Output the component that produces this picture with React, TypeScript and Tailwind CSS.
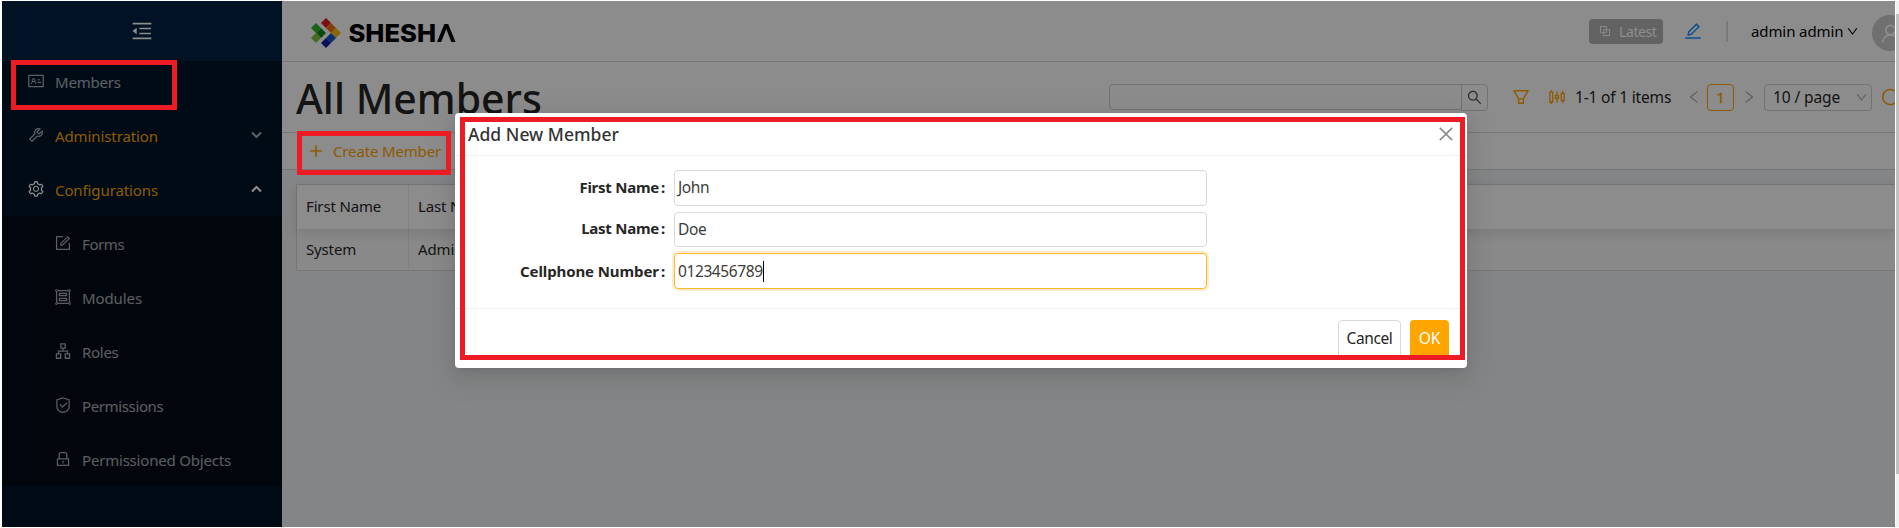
import React from 'react';
import {
  AiOutlineMenuFold, AiOutlineIdcard, AiOutlineTool, AiOutlineSetting, AiOutlineForm, AiOutlineGroup,
  AiOutlineApartment, AiOutlineSafety, AiOutlineLock, AiOutlineDown, AiOutlineBlock,
  AiOutlineEdit, AiOutlineUser, AiOutlineSearch, AiOutlineFilter, AiOutlineSliders, AiOutlineLeft,
  AiOutlineRight, AiOutlineReload, AiOutlinePlus, AiOutlineClose,
} from 'react-icons/ai';

type Icon = React.ComponentType<{ className?: string }>;

function MenuItem({ icon: I, label, tracking, arrow, parent, open, nested }: {
  icon: Icon; label: string; tracking: string; arrow?: 'up' | 'down'; parent?: boolean; open?: boolean; nested?: boolean;
}) {
  return (
    <li className={`flex h-[54px] items-center pr-5 ${nested ? 'pl-[52px]' : 'pl-[25px]'} ${open ? 'text-white' : 'text-white/65'}`}>
      <I className="-mt-0.5 h-[18px] w-[18px] shrink-0" />
      <span className={`ml-[10px] flex-1 whitespace-nowrap text-[15px] ${tracking} ${parent ? 'text-[#ffa500]' : ''}`}>{label}</span>
      {arrow && (
        <svg className="-mt-0.5" width="11" height="8" viewBox="0 0 11 8" fill="none" stroke="currentColor" strokeWidth="2">
          <path d={arrow === 'down' ? 'M1 1.500 5.500 6 10 1.500' : 'M1 6.500 5.500 2 10 6.500'} />
        </svg>
      )}
    </li>
  );
}

function Sidebar() {
  return (
    <aside className="w-[280px] shrink-0 bg-[#001529]">
      <div className="relative z-10 flex h-[60px] items-center justify-center bg-[#002140] text-white">
        <AiOutlineMenuFold className="h-[24px] w-[24px]" />
      </div>
      <ul className="-mt-[6px]">
        <MenuItem icon={AiOutlineIdcard} label="Members" tracking="tracking-[-0.2px]" />
        <MenuItem icon={AiOutlineTool} label="Administration" tracking="tracking-[-0.1px]" parent arrow="down" />
        <MenuItem icon={AiOutlineSetting} label="Configurations" tracking="tracking-[-0.1px]" parent open arrow="up" />
      </ul>
      <ul className="-mt-px h-[270px] bg-[#000c17] pt-px">
        <MenuItem nested icon={AiOutlineForm} label="Forms" tracking="tracking-[-0.4px]" />
        <MenuItem nested icon={AiOutlineGroup} label="Modules" tracking="tracking-[-0.1px]" />
        <MenuItem nested icon={AiOutlineApartment} label="Roles" tracking="tracking-[-0.3px]" />
        <MenuItem nested icon={AiOutlineSafety} label="Permissions" tracking="tracking-[-0.37px]" />
        <MenuItem nested icon={AiOutlineLock} label="Permissioned Objects" tracking="tracking-[-0.2px]" />
      </ul>
    </aside>
  );
}

function Logo() {
  return (
    <svg width="146" height="32" viewBox="0 0 146 32">
      <g>
        <path d="M10 5 15 0 20 5 15 10Z" fill="#e01b22" />
        <path d="M15 10 20 5 25 10 20 15Z" fill="#f36f12" />
        <path d="M20 15 25 10 30 15 25 20Z" fill="#fdb913" />
        <path d="M15 20 20 15 25 20 20 25Z" fill="#1550c4" />
        <path d="M10 25 15 20 20 25 15 30Z" fill="#0b1fa0" />
        <path d="M0 10 5 5 10 10 5 15Z" fill="#2fb32a" />
        <path d="M5 15 10 10 15 15 10 20Z" fill="#0c8a17" />
        <path d="M0 20 5 15 10 20 5 25Z" fill="#7fc241" />
      </g>
      <text x="37.500" y="24" fontFamily="Inter, sans-serif" fontWeight="800" fontSize="24.500" textLength="87.500" lengthAdjust="spacingAndGlyphs">SHESH</text>
      <path d="M126 24 133.400 6 137.200 6 144.500 24 140.300 24 135.300 11 130.200 24Z" fill="#000" />
    </svg>
  );
}

function TopBar() {
  return (
    <header className="flex h-[61px] shrink-0 items-center border-b border-[#d9d9d9] bg-white">
      <div className="ml-[29px] mt-[6px]"><Logo /></div>
      <div className="flex-1" />
      <div className="flex h-[25px] w-[74px] items-center rounded-sm bg-[#b4b4b4] pl-[9px] text-white">
        <AiOutlineBlock className="h-[14px] w-[14px]" />
        <span className="ml-[7px] mt-px text-[14px] tracking-[-0.4px]">Latest</span>
      </div>
      <AiOutlineEdit className="ml-[20px] h-[20px] w-[20px] text-[#1890ff]" />
      <div className="ml-[23px] h-[21px] w-[2px] bg-[#dcdcdc]" />
      <span className="ml-[23px] w-[92px] whitespace-nowrap text-[15px] tracking-[-0.1px] text-black">admin admin</span>
      <AiOutlineDown className="ml-[3px] h-[13px] w-[13px] text-black" />
      <div className="-mr-[13px] ml-[13px] mt-1 flex h-9 w-9 shrink-0 items-center justify-center rounded-full bg-[#cccccc] text-white">
        <AiOutlineUser className="h-[23px] w-[23px]" />
      </div>
    </header>
  );
}

function TitleBar() {
  return (
    <div className="flex h-[71px] shrink-0 items-center border-b border-[#d9d9d9] bg-white pl-[14px]">
      <h1 className="mt-[3px] w-[300px] whitespace-nowrap text-[41px] font-medium text-[#262626]">All Members</h1>
      <div className="flex-1" />
      <div className="flex h-[27px] w-[379px] items-start">
        <div className="h-[26px] flex-1 rounded-l-sm border border-[#d0d0d0]" />
        <div className="-ml-px flex h-[27px] w-[27px] items-center justify-center rounded-r-sm border border-[#d0d0d0]">
          <AiOutlineSearch className="h-[17px] w-[17px] text-[#555]" />
        </div>
      </div>
      <AiOutlineFilter className="ml-[23px] h-[20px] w-[20px] text-[#ffa500]" />
      <AiOutlineSliders className="ml-[16px] h-[20px] w-[20px] text-[#ffa500]" />
      <span className="ml-[8px] mt-[2px] w-[98px] whitespace-nowrap text-[15.500px] tracking-[-0.18px] text-[#262626]">1-1 of 1 items</span>
      <AiOutlineLeft className="ml-[13px] h-4 w-4 text-[#b0b0b0]" />
      <span className="ml-[5px] flex h-[27px] w-[27px] items-center justify-center rounded-sm border border-[#ffa500] text-[15px] text-[#ffa500] [-webkit-text-stroke:0.3px_#ffa500]">1</span>
      <AiOutlineRight className="ml-[7px] h-4 w-4 text-[#b0b0b0]" />
      <div className="ml-[7px] flex h-[27px] w-[108px] items-center justify-between rounded-sm border border-[#d0d0d0] pl-2 pr-[3px]">
        <span className="mt-px whitespace-nowrap text-[15.500px] tracking-[-0.1px] text-[#262626]">10 / page</span>
        <AiOutlineDown className="h-[13px] w-[13px] text-[#aaa]" />
      </div>
      <div className="-mr-[5px] ml-[8px]"><AiOutlineReload className="h-[20px] w-[20px] text-[#ffa500]" /></div>
    </div>
  );
}

function MembersTable() {
  return (
    <div className="mt-[14px] ml-[14px] border border-[#d9d9d9] border-r-0 text-[15px] tracking-[-0.15px] text-[#262626]">
      <div className="relative flex h-[44px] bg-white shadow-[0_4px_14px_rgba(0,0,0,0.12)]">
        <div className="flex w-[112px] items-center border-r border-[#ececec] pb-0.5 pl-[9px]">First Name</div>
        <div className="flex items-center pb-0.5 pl-[9px]">Last Name</div>
      </div>
      <div className="flex h-[41px] bg-[#fafafa]">
        <div className="flex w-[112px] items-center border-r border-[#ececec] pl-[9px]">System</div>
        <div className="flex items-center pl-[9px]">Admin</div>
      </div>
    </div>
  );
}

function Field({ label, value, tracking, className, focused }: {
  label: string; value: string; tracking: string; className: string; focused?: boolean;
}) {
  return (
    <div className="flex items-center">
      <label className={`flex w-[211px] justify-end whitespace-nowrap pr-[9px] text-[15px] font-bold text-[#262626] ${focused ? '' : 'pb-0.5'} ${tracking}`}>
        {label}<span className="ml-[2px]">:</span>
      </label>
      <div className={`flex w-[533px] items-center rounded-sm border pl-[3px] text-[15.500px] text-[#3c3c3c] ${className}`}>
        <span className="tracking-[-0.4px]">{value}</span>
        {focused && <span className="h-[21px] w-px bg-black" />}
      </div>
    </div>
  );
}

function MemberDialog() {
  return (
    <div className="absolute left-[455px] top-[113px] flex h-[255px] w-[1012px] flex-col rounded-sm bg-white shadow-[0_3px_6px_-4px_rgba(0,0,0,0.12),0_6px_16px_rgba(0,0,0,0.08),0_9px_28px_8px_rgba(0,0,0,0.06)]">
      <div className="flex h-[43px] shrink-0 items-center justify-between border-b border-[#f0f0f0] pl-[13px] pr-[11px]">
        <span className="text-[17.500px] font-medium tracking-[0.02px] text-[#333]">Add New Member</span>
        <AiOutlineClose className="h-[20px] w-[20px] text-[#8c8c8c]" />
      </div>
      <div className="flex h-[153px] shrink-0 flex-col border-b border-[#f0f0f0] pl-2 pt-[14px]">
        <Field label="First Name" value="John" tracking="tracking-[-0.25px]" className="h-[36px] border-[#d9d9d9]" />
        <div className="h-[6px]" />
        <Field label="Last Name" value="Doe" tracking="tracking-[-0.25px]" className="h-[35px] border-[#d9d9d9]" />
        <div className="h-[6px]" />
        <Field focused label="Cellphone Number" value="0123456789" tracking="tracking-[-0.1px]" className="h-[36px] border-[#ffb829] pt-px shadow-[0_0_0_2px_rgba(255,165,0,0.2)]" />
      </div>
      <div className="flex justify-end gap-[9px] pr-[18px] pt-[11px]">
        <div className="flex h-[38px] w-[63px] items-center justify-center rounded-sm border border-[#d9d9d9] text-[15.500px] tracking-[-0.4px] text-[#262626]">Cancel</div>
        <div className="flex h-[38px] w-[39px] items-center justify-center rounded-sm bg-[#ffa500] text-[15.500px] text-white">OK</div>
      </div>
    </div>
  );
}

export default function App() {
  return (
    <div className="relative flex h-[528px] w-[1899px] overflow-hidden bg-white py-px pl-[2px] font-['Noto_Sans',sans-serif]">
      <div className="relative flex w-[1893px] shrink-0 overflow-hidden">
        <Sidebar />
        <main className="flex min-w-0 flex-1 flex-col bg-[#f0f2f5]">
          <TopBar />
          <TitleBar />
          <div className="flex h-[37px] shrink-0 items-center border-b border-[#d9d9d9] bg-white pl-[26px] text-[#ffa500]">
            <AiOutlinePlus className="h-4 w-4" strokeWidth={30} />
            <span className="ml-[9px] text-[15px] tracking-[-0.15px]">Create Member</span>
          </div>
          <MembersTable />
        </main>
        <div className="absolute inset-0 z-20 bg-black/45" />
      </div>
      <div className="ml-px w-[3px] bg-[#f1f1f1] pt-[13px]"><div className="h-[460px] bg-[#c1c1c1]" /></div>
      <div className="absolute inset-0 z-30">
        <MemberDialog />
        <div className="absolute left-[11px] top-[60px] h-[50px] w-[166px] border-[5px] border-[#ed1c24]" />
        <div className="absolute left-[297px] top-[131px] h-[44px] w-[154px] border-[5px] border-[#ed1c24]" />
        <div className="absolute left-[460px] top-[117px] h-[243px] w-[1005px] border-[5px] border-[#ed1c24]" />
      </div>
    </div>
  );
}
